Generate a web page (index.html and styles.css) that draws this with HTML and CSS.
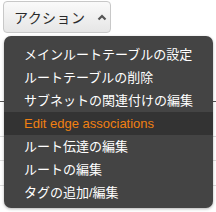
FILE: index.html
```html
<!DOCTYPE html>
<html lang="ja">
<head>
<meta charset="utf-8">
<link rel="stylesheet" href="styles.css">
</head>
<body>
<div class="page">
  <div class="bg">
    <div class="bg-line l1"></div>
    <div class="bg-line l2"></div>
    <div class="bg-line l3"></div>
    <div class="bg-line l4"></div>
  </div>
  <div class="dropdown">
    <button class="btn">アクション
      <svg class="caret" width="10" height="7" viewBox="0 0 10 7"><path d="M1.5 5.5 L5 2 L8.5 5.5" fill="none" stroke="#555" stroke-width="2.2"/></svg>
    </button>
    <ul class="menu">
      <li class="item">メインルートテーブルの設定</li>
      <li class="item">ルートテーブルの削除</li>
      <li class="item">サブネットの関連付けの編集</li>
      <li class="item active">Edit edge associations</li>
      <li class="item">ルート伝達の編集</li>
      <li class="item">ルートの編集</li>
      <li class="item">タグの追加/編集</li>
    </ul>
  </div>
</div>
</body>
</html>
```
FILE: styles.css
```css
html, body {
  margin: 0;
  padding: 0;
  background: #fff;
}
body {
  width: 216px;
  height: 212px;
  overflow: hidden;
  font-family: "Liberation Sans", "Noto Sans CJK JP", sans-serif;
}
.page {
  position: relative;
  width: 216px;
  height: 212px;
  box-sizing: border-box;
  padding: 1px 0 0 3px;
}
.bg {
  position: absolute;
  inset: 0;
}
.bg-line {
  position: absolute;
  left: 0;
  right: 0;
  height: 1px;
  background: #ddd;
}
.l1 { top: 101px; background: #555; }
.l2 { top: 136px; }
.l3 { top: 160px; }
.l4 { top: 185px; }
.dropdown {
  position: relative;
}
.btn {
  width: 108px;
  height: 32px;
  box-sizing: border-box;
  margin: 0;
  border: 1px solid #c8c8c8;
  border-radius: 4px;
  background: linear-gradient(#fafafa, #e6e6e6);
  font-family: "Noto Sans CJK JP", sans-serif;
  font-size: 14px;
  letter-spacing: 0.4px;
  color: #2a2a2a;
  padding: 0 0 0 10px;
  display: flex;
  align-items: center;
  gap: 12px;
}
.caret {
  display: block;
}
.menu {
  position: absolute;
  left: 1px;
  top: 35px;
  width: 209px;
  height: 172px;
  box-sizing: border-box;
  margin: 0;
  padding: 7px 0 0 0;
  list-style: none;
  background: #444;
  border-radius: 7px;
  box-shadow: 0 1px 3px rgba(0,0,0,0.3);
}
.item {
  height: 23px;
  line-height: 23px;
  padding-left: 20px;
  color: #fff;
  font-size: 13px;
  white-space: nowrap;
}
.item.active {
  background: #333;
  color: #f08012;
}
```
